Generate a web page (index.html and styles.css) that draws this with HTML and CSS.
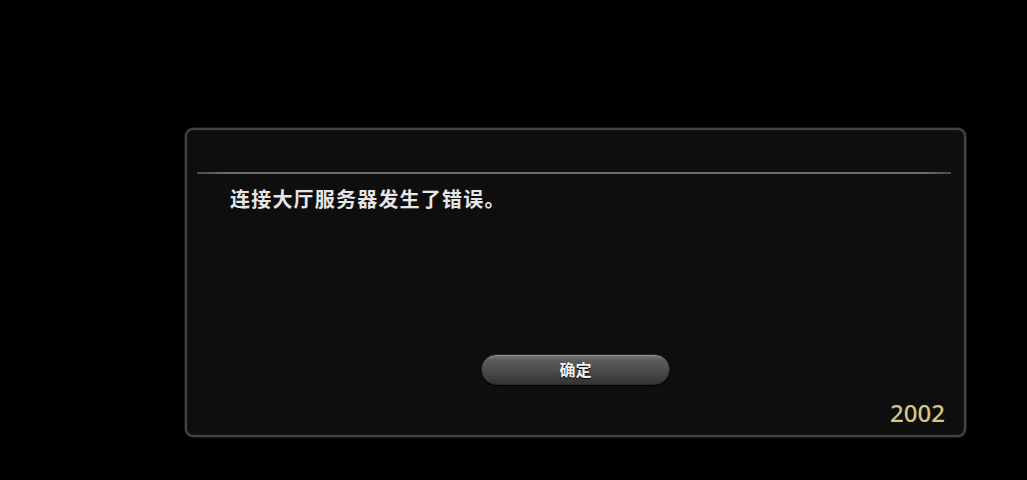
FILE: index.html
```html
<!DOCTYPE html>
<html lang="zh-CN">
<head>
<meta charset="utf-8">
<title>错误</title>
<link rel="stylesheet" href="styles.css">
</head>
<body>
<div class="stage">
  <div class="dialog">
    <div class="separator"></div>
    <div class="message">连接大厅服务器发生了错误。</div>
    <div class="actions">
      <button class="btn">确定</button>
    </div>
    <div class="code">2002</div>
  </div>
</div>
</body>
</html>
```
FILE: styles.css
```css
html, body {
  margin: 0;
  padding: 0;
  background: #000;
  width: 1027px;
  height: 480px;
  overflow: hidden;
}

.stage {
  padding: 128px 0 0 185px;
}

.dialog {
  box-sizing: border-box;
  width: 781px;
  height: 309px;
  border: 2px solid #444;
  border-radius: 8px;
  background: #0e0e0e;
  box-shadow: 0 0 0 1px #161616, inset 0 0 0 1px #141414;
  display: flex;
  flex-direction: column;
  font-family: "Noto Sans CJK SC", "Noto Sans", sans-serif;
}

.separator {
  margin: 42px 13px 0 10px;
  height: 2px;
  background: linear-gradient(90deg, #4a4a4a 0%, #6e6e6e 4%, #6e6e6e 96%, #4a4a4a 100%);
}

.message {
  margin-top: 13px;
  padding-left: 43px;
  font-size: 20px;
  line-height: 24px;
  font-weight: 700;
  color: #e6e6e6;
  letter-spacing: 1.2px;
}

.actions {
  margin-top: 143px;
  display: flex;
  justify-content: center;
}

.btn {
  box-sizing: border-box;
  width: 189px;
  height: 31px;
  border: 1px solid #2a2a2a;
  border-radius: 16px;
  background: linear-gradient(180deg, #7a7a7a 0%, #5c5c5c 18%, #4e4e4e 50%, #3e3e3e 80%, #333 100%);
  box-shadow: inset 0 1px 0 rgba(255,255,255,0.18), 0 1px 1px #000;
  color: #f2f2f2;
  font-family: "Noto Sans CJK SC", sans-serif;
  font-size: 16px;
  font-weight: 700;
  line-height: 29px;
  padding: 0;
  text-shadow: 0 1px 1px #000;
}

.code {
  margin-top: 14px;
  padding-right: 19px;
  text-align: right;
  font-family: "Noto Sans", sans-serif;
  font-size: 24px;
  font-weight: 500;
  line-height: 28px;
  color: #d9c57e;
}
```
